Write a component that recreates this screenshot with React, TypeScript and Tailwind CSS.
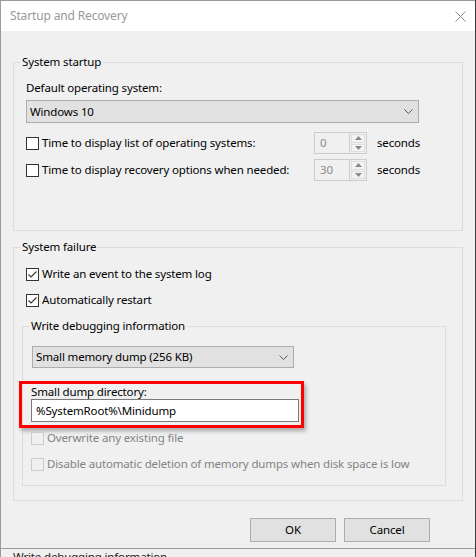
import React from "react";

function Check({ checked = false, disabled = false }: { checked?: boolean; disabled?: boolean }) {
  return (
    <span
      className={`w-[13px] h-[13px] shrink-0 border flex items-center justify-center ${
        disabled ? "border-[#cccccc] bg-[#f0f0f0]" : "border-[#333333] bg-white"
      }`}
    >
      {checked && (
        <svg width="11" height="11" viewBox="0 0 11 11" fill="none">
          <path d="M1.5 5.5 L4 8 L9.5 2.5" stroke="#333333" strokeWidth="1.1" />
        </svg>
      )}
    </span>
  );
}

function Chevron() {
  return (
    <svg width="9" height="5" viewBox="0 0 9 5" fill="none">
      <path d="M0.5 0.5 L4.5 4.5 L8.5 0.5" stroke="#555555" strokeWidth="1" />
    </svg>
  );
}

function Combo({ value, width, height = 23 }: { value: string; width: string; height?: number }) {
  return (
    <div
      className={`${width} ${height === 23 ? "h-[23px]" : "h-[22px]"} border border-[#adadad] bg-[#e1e1e1] flex items-center justify-between pl-[3px] pr-[5px]`}
    >
      <span>{value}</span>
      <Chevron />
    </div>
  );
}

function Spin({ value }: { value: string }) {
  return (
    <div className="w-[53px] h-[22px] shrink-0 flex border border-[#cccccc] bg-[#f0f0f0]">
      <span className="flex-1 pl-[5px] leading-[20px] text-[#8c8c8c]">{value}</span>
      <div className="w-[17px] flex flex-col border-l border-[#cccccc] p-px gap-px">
        <div className="flex-1 border border-[#dedede] bg-[#f3f3f3] flex items-center justify-center">
          <svg width="7" height="4" viewBox="0 0 7 4">
            <path d="M0 4 L3.5 0 L7 4 Z" fill="#8a8a8a" />
          </svg>
        </div>
        <div className="flex-1 border border-[#dedede] bg-[#f3f3f3] flex items-center justify-center">
          <svg width="7" height="4" viewBox="0 0 7 4">
            <path d="M0 0 L3.5 4 L7 0 Z" fill="#8a8a8a" />
          </svg>
        </div>
      </div>
    </div>
  );
}

function Button({ label }: { label: string }) {
  return (
    <button className="w-[86px] h-[24px] border border-[#adadad] bg-[#e1e1e1] flex items-center justify-center">
      {label}
    </button>
  );
}

export default function App() {
  return (
    <div className="w-[476px] h-[557px] bg-[#3c3c3c] overflow-hidden font-['Segoe_UI','Noto_Sans',sans-serif] text-[11.5px] tracking-[-0.15px] leading-4 text-black">
      <div className="w-[475px] h-[549px] flex flex-col border-l border-t border-b border-[#9b9b9b] bg-[#f0f0f0]">
        {/* Title bar */}
        <div className="h-[30px] shrink-0 bg-white flex items-center justify-between pl-[9px] pr-[9px]">
          <span className="text-[#999999] text-[12px]">Startup and Recovery</span>
          <svg width="11" height="11" viewBox="0 0 11 11" fill="none">
            <path d="M0.5 0.5 L10.5 10.5 M10.5 0.5 L0.5 10.5" stroke="#8a8a8a" strokeWidth="1" />
          </svg>
        </div>

        <div className="flex-1 flex flex-col px-[12px] pt-[23px]">
          {/* System startup */}
          <fieldset className="h-[177px] border border-[#dcdcdc] pl-[12px] m-0">
            <legend className="ml-[-6px] px-[2px]">System startup</legend>
            <div className="mt-[10px]">Default operating system:</div>
            <div className="mt-[4px]">
              <Combo value="Windows 10" width="w-[393px]" />
            </div>
            <div className="mt-[9px] h-[22px] flex items-center">
              <div className="w-[288px] flex items-center gap-[3px]">
                <Check />
                <span>Time to display list of operating systems:</span>
              </div>
              <Spin value="0" />
              <span className="ml-[10px]">seconds</span>
            </div>
            <div className="mt-[5px] h-[22px] flex items-center">
              <div className="w-[288px] flex items-center gap-[3px]">
                <Check />
                <span>Time to display recovery options when needed:</span>
              </div>
              <Spin value="30" />
              <span className="ml-[10px]">seconds</span>
            </div>
          </fieldset>

          {/* System failure */}
          <fieldset className="mt-[8px] h-[262px] border border-[#dcdcdc] pl-[12px] m-0">
            <legend className="ml-[-6px] px-[2px]">System failure</legend>
            <div className="mt-[8px] h-[22px] flex items-center gap-[3px]">
              <Check checked />
              <span>Write an event to the system log</span>
            </div>
            <div className="mt-[4px] h-[22px] flex items-center gap-[3px]">
              <Check checked />
              <span>Automatically restart</span>
            </div>

            <fieldset className="mt-[7px] -ml-[4px] w-[424px] h-[168px] border border-[#dcdcdc] pl-[9px]">
              <legend className="ml-[-3px] px-[2px]">Write debugging information</legend>
              <div className="mt-[12px]">
                <Combo value="Small memory dump (256 KB)" width="w-[262px]" height={22} />
              </div>

              <div className="mt-[13px] -ml-[13px] w-[285px] border-[3px] border-[#ff0000] pl-[9px] pr-[2px] pb-[3px] shadow-[2px_3px_4px_rgba(0,0,0,0.3)]">
                <div className="leading-[15px]">Small dump directory:</div>
                <div className="h-[23px] w-[268px] border border-[#7a7a7a] bg-white pl-[4px] leading-[21px]">
                  %SystemRoot%\Minidump
                </div>
              </div>

              <div className="h-[20px] -ml-[1px] flex items-center gap-[3px] text-[#838383]">
                <Check disabled />
                <span>Overwrite any existing file</span>
              </div>
              <div className="mt-[6px] h-[20px] -ml-[1px] flex items-center gap-[3px] text-[#838383]">
                <Check disabled />
                <span>Disable automatic deletion of memory dumps when disk space is low</span>
              </div>
            </fieldset>
          </fieldset>

          {/* Dialog buttons */}
          <div className="mt-[17px] flex justify-end gap-[8px] pr-[33px]">
            <Button label="OK" />
            <Button label="Cancel" />
          </div>
        </div>
      </div>

      {/* Edge of the window underneath */}
      <div className="h-[8px] w-[475px] bg-[#f0f0f0] border-l border-[#9b9b9b] pl-[12px] overflow-hidden text-[#222222]">
        Write debugging information
      </div>
    </div>
  );
}
